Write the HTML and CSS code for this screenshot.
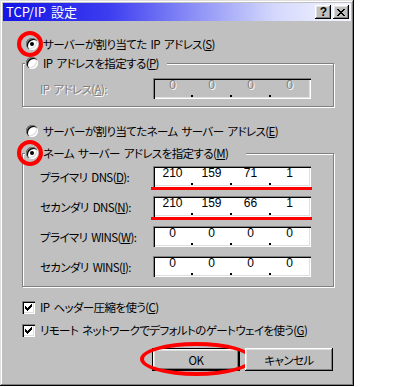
FILE: index.html
```html
<!DOCTYPE html>
<html lang="ja">
  <head>
    <meta charset="UTF-8" />
    <title>TCP/IP 設定</title>
    <link rel="stylesheet" href="styles.css">
  </head>
  <body>
    <div class="window">
      <div class="titlebar">
        <span class="title">TCP/IP 設定</span>
        <div class="title-buttons">
          <div class="tbtn help">?</div>
          <div class="tbtn close">
            <svg width="8" height="7" viewBox="0 0 8 7" shape-rendering="crispEdges">
              <path d="M0 0h2v1H0zM6 0h2v1H6zM1 1h2v1H1zM5 1h2v1H5zM2 2h4v1H2zM3 3h2v1H3zM2 4h4v1H2zM1 5h2v1H1zM5 5h2v1H5zM0 6h2v1H0zM6 6h2v1H6z" fill="#000"/>
            </svg>
          </div>
        </div>
      </div>

      <div class="content">
        <div class="option first">
          <span class="radio on marked"></span>
          <span>サーバーが割り当てた IP アドレス(<u>S</u>)</span>
        </div>

        <div class="group group-ip">
          <div class="legend">
            <span class="radio"></span>
            <span>IP アドレスを指定する(<u>P</u>)</span>
          </div>
          <div class="field-row first-row disabled">
            <span class="label">IP アドレス(<u>A</u>):</span>
            <div class="ipfield">
              <span class="octet">0</span><span class="dot"></span>
              <span class="octet">0</span><span class="dot"></span>
              <span class="octet">0</span><span class="dot"></span>
              <span class="octet">0</span>
            </div>
          </div>
        </div>

        <div class="option third">
          <span class="radio"></span>
          <span>サーバーが割り当てたネーム サーバー アドレス(<u>E</u>)</span>
        </div>

        <div class="group group-dns">
          <div class="legend">
            <span class="radio on marked"></span>
            <span>ネーム サーバー アドレスを指定する(<u>M</u>)</span>
          </div>
          <div class="field-row first-row">
            <span class="label">プライマリ DNS(<u>D</u>):</span>
            <div class="ipfield marked">
              <span class="octet">210</span><span class="dot"></span>
              <span class="octet">159</span><span class="dot"></span>
              <span class="octet">71</span><span class="dot"></span>
              <span class="octet">1</span>
            </div>
          </div>
          <div class="field-row">
            <span class="label">セカンダリ DNS(<u>N</u>):</span>
            <div class="ipfield marked">
              <span class="octet">210</span><span class="dot"></span>
              <span class="octet">159</span><span class="dot"></span>
              <span class="octet">66</span><span class="dot"></span>
              <span class="octet">1</span>
            </div>
          </div>
          <div class="field-row">
            <span class="label">プライマリ WINS(<u>W</u>):</span>
            <div class="ipfield">
              <span class="octet">0</span><span class="dot"></span>
              <span class="octet">0</span><span class="dot"></span>
              <span class="octet">0</span><span class="dot"></span>
              <span class="octet">0</span>
            </div>
          </div>
          <div class="field-row">
            <span class="label">セカンダリ WINS(<u>I</u>):</span>
            <div class="ipfield">
              <span class="octet">0</span><span class="dot"></span>
              <span class="octet">0</span><span class="dot"></span>
              <span class="octet">0</span><span class="dot"></span>
              <span class="octet">0</span>
            </div>
          </div>
        </div>

        <div class="check-row first-check">
          <span class="check">
            <svg width="7" height="7" viewBox="0 0 7 7" shape-rendering="crispEdges">
              <path d="M6 0h1v1H6zM5 1h2v1H5zM0 2h1v1H0zM4 2h3v1H4zM0 3h2v1H0zM3 3h3v1H3zM0 4h5v1H0zM1 5h3v1H1zM2 6h1v1H2z" fill="#000"/>
            </svg>
          </span>
          <span>IP ヘッダー圧縮を使う(<u>C</u>)</span>
        </div>
        <div class="check-row">
          <span class="check">
            <svg width="7" height="7" viewBox="0 0 7 7" shape-rendering="crispEdges">
              <path d="M6 0h1v1H6zM5 1h2v1H5zM0 2h1v1H0zM4 2h3v1H4zM0 3h2v1H0zM3 3h3v1H3zM0 4h5v1H0zM1 5h3v1H1zM2 6h1v1H2z" fill="#000"/>
            </svg>
          </span>
          <span>リモート ネットワークでデフォルトのゲートウェイを使う(<u>G</u>)</span>
        </div>

        <div class="buttons">
          <div class="btn default marked">OK</div>
          <div class="btn">キャンセル</div>
        </div>
      </div>
    </div>
  </body>
</html>
```

FILE: styles.css
```css
body {
  margin: 0;
  background: #fff;
  font-family: "Noto Sans CJK JP", "Noto Sans", sans-serif;
  font-size: 11.5px;
  letter-spacing: -0.6px;
  word-spacing: 2px;
  font-feature-settings: "palt";
  color: #000;
}

u {
  text-decoration-thickness: 1px;
  text-underline-offset: 1px;
}

.window {
  position: relative;
  width: 354px;
  height: 386px;
  box-sizing: border-box;
  padding: 3px;
  background: #c0c0c0;
  box-shadow: inset -1px -1px #000, inset 1px 1px #dfdfdf,
    inset -2px -2px #808080, inset 2px 2px #fff;
}

.titlebar {
  height: 18px;
  display: flex;
  align-items: center;
  justify-content: space-between;
  padding: 0 2px 0 3px;
  background: linear-gradient(90deg, #1414e6 0%, #3c3cf0 30%, #8c90f6 55%, #d4d8fc 78%, #f6f6ff 100%);
  color: #fff;
}

.title {
  line-height: 18px;
  font-size: 13px;
  letter-spacing: 0;
}

.title-buttons {
  display: flex;
  gap: 2px;
}

.tbtn {
  width: 16px;
  height: 14px;
  box-sizing: border-box;
  display: flex;
  align-items: center;
  justify-content: center;
  background: #c0c0c0;
  color: #000;
  box-shadow: inset -1px -1px #000, inset 1px 1px #fff,
    inset -2px -2px #808080, inset 2px 2px #dfdfdf;
}

.tbtn.help {
  font-family: "Liberation Sans", sans-serif;
  font-weight: bold;
  font-size: 12px;
  line-height: 14px;
}

.content {
  padding: 15px 17px 0 19px;
}

/* radio buttons */
.option {
  display: flex;
  align-items: center;
  gap: 5px;
  height: 16px;
  margin-left: 4px;
  white-space: nowrap;
}

.option.third {
  margin-top: 16px;
}

.radio {
  position: relative;
  flex: none;
  width: 12px;
  height: 12px;
  border-radius: 50%;
  background: #fff;
  box-shadow: inset 1px 1px #808080, inset 2px 2px #000,
    inset -1px -1px #fff, inset -2px -2px #dfdfdf;
}

.radio.on::after {
  content: "";
  position: absolute;
  left: 4px;
  top: 4px;
  width: 4px;
  height: 4px;
  border-radius: 50%;
  background: #000;
}

.radio.marked::before {
  content: "";
  position: absolute;
  left: -9px;
  top: -7px;
  width: 26px;
  height: 26px;
  box-sizing: border-box;
  border: 4px solid #f00;
  border-radius: 50%;
}

/* group boxes */
.group {
  width: 312px;
  box-sizing: border-box;
  border: 1px solid #808080;
  box-shadow: 1px 1px 0 #fff, inset 1px 1px 0 #fff;
}

.group-ip {
  margin-top: 11px;
  padding-bottom: 7px;
}

.group-dns {
  margin-top: 14px;
  padding-bottom: 9px;
}

.legend {
  display: flex;
  align-items: center;
  gap: 5px;
  height: 16px;
  margin: -9px 0 0 2px;
  padding-left: 1px;
  background: #c0c0c0;
  white-space: nowrap;
}

.group-ip .legend {
  width: 141px;
}

.group-dns .legend {
  width: 220px;
}

.field-row {
  display: flex;
  align-items: center;
  height: 21px;
  margin-top: 9px;
  padding-left: 17px;
}

.group-ip .field-row.first-row {
  margin-top: 7px;
}

.group-dns .field-row.first-row {
  margin-top: 5px;
}

.label {
  width: 113px;
  white-space: nowrap;
}

.ipfield {
  position: relative;
  width: 158px;
  height: 21px;
  box-sizing: border-box;
  display: flex;
  padding: 0 1px 1px 2px;
  background: #fff;
  box-shadow: inset 1px 1px #808080, inset 2px 2px #000,
    inset -1px -1px #fff, inset -2px -2px #dfdfdf;
}

.ipfield.marked::after {
  content: "";
  position: absolute;
  left: -2px;
  bottom: -3px;
  width: 161px;
  height: 3px;
  background: #f00;
}

.octet {
  width: 35px;
  text-align: center;
  line-height: 14px;
  font-family: "Liberation Sans", sans-serif;
  font-size: 12px;
  letter-spacing: 0;
}

.dot {
  position: relative;
  width: 4px;
}

.dot::after {
  content: "";
  position: absolute;
  left: 1px;
  bottom: 1px;
  width: 2px;
  height: 2px;
  background: #000;
}

.disabled .label,
.disabled .octet {
  color: #808080;
  text-shadow: 1px 1px 0 #fff;
}

.disabled .ipfield {
  background: #c0c0c0;
}

/* checkboxes */
.check-row {
  display: flex;
  align-items: center;
  gap: 5px;
  height: 16px;
  margin-top: 7px;
  white-space: nowrap;
}

.check-row.first-check {
  margin-top: 12px;
}

.check {
  flex: none;
  width: 13px;
  height: 13px;
  box-sizing: border-box;
  display: flex;
  align-items: center;
  justify-content: center;
  background: #fff;
  box-shadow: inset 1px 1px #808080, inset 2px 2px #000,
    inset -1px -1px #fff, inset -2px -2px #dfdfdf;
}

/* dialog buttons */
.buttons {
  display: flex;
  gap: 5px;
  margin: 10px 0 0 130px;
}

.btn {
  position: relative;
  width: 88px;
  height: 23px;
  box-sizing: border-box;
  display: flex;
  align-items: center;
  justify-content: center;
  background: #c0c0c0;
  box-shadow: inset -1px -1px #000, inset 1px 1px #fff,
    inset -2px -2px #808080, inset 2px 2px #dfdfdf;
}

.btn.default {
  box-shadow: inset 0 0 0 1px #000, inset 2px 2px #fff,
    inset -2px -2px #000, inset 3px 3px #dfdfdf, inset -3px -3px #808080;
}

.btn.marked::after {
  content: "";
  position: absolute;
  left: -12px;
  top: -6px;
  width: 113px;
  height: 34px;
  box-sizing: border-box;
  border: 4px solid #f00;
  border-radius: 50%;
}
```
